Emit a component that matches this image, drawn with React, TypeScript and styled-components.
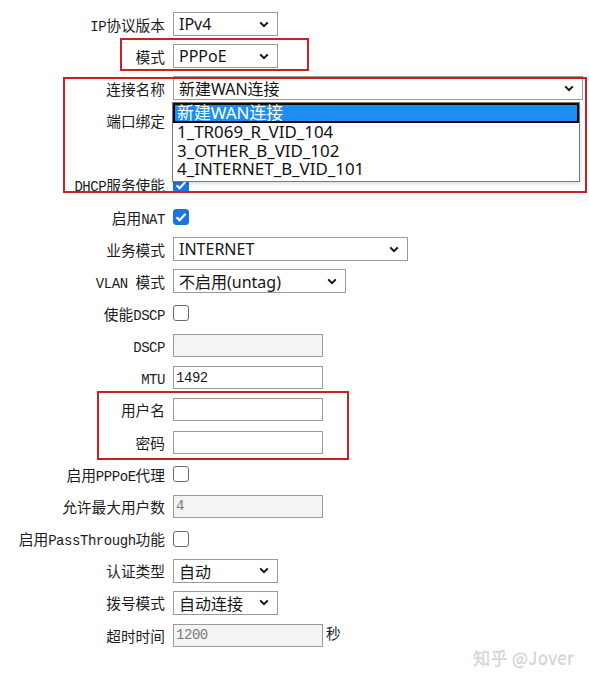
import React from 'react';
import styled, { createGlobalStyle } from 'styled-components';

const GlobalStyle = createGlobalStyle`
  html, body {
    margin: 0;
    padding: 0;
    background: #fff;
  }
  body {
    font-family: "Noto Sans", "Noto Sans CJK SC", sans-serif;
  }
`;

const ROW = 32.16;

const Page = styled.div`
  position: relative;
  width: 589px;
  height: 683px;
  padding-top: 8px;
  box-sizing: border-box;
  overflow: hidden;
`;

const Form = styled.div`
  display: flex;
  flex-direction: column;
`;

const Row = styled.div<{ $span?: number }>`
  display: grid;
  grid-template-columns: 165px 1fr;
  column-gap: 8px;
  align-items: start;
  height: ${({ $span }) => ROW * ($span || 1)}px;
`;

const Label = styled.div`
  height: ${ROW}px;
  display: flex;
  align-items: center;
  justify-content: flex-end;
  white-space: nowrap;
  font-family: "Noto Sans CJK SC", sans-serif;
  font-size: 14.7px;
  color: #1c1c1c;
`;

const Latin = styled.span`
  font-family: "Liberation Mono", monospace;
  font-size: 14px;
  letter-spacing: -0.45px;
`;

const Field = styled.div`
  height: ${ROW}px;
  display: flex;
  align-items: center;
  gap: 3px;
`;

const SelectBox = styled.div<{ $w: number }>`
  box-sizing: border-box;
  width: ${({ $w }) => $w}px;
  height: 24px;
  border: 1px solid #9a9a9a;
  background: #fff;
  display: flex;
  align-items: center;
  justify-content: space-between;
  padding: 0 8px 0 5px;
  font-family: "Noto Sans", "Noto Sans CJK SC", sans-serif;
  font-size: 16px;
  color: #151515;

  svg {
    width: 10px;
    height: 7px;
    flex: none;
  }
`;

const TextBox = styled.div<{ $disabled?: boolean }>`
  box-sizing: border-box;
  width: 150px;
  height: 23px;
  border: 1px solid #9a9a9a;
  background: ${({ $disabled }) => ($disabled ? '#f4f4f4' : '#fff')};
  color: ${({ $disabled }) => ($disabled ? '#7a7a7a' : '#1c1c1c')};
  display: flex;
  align-items: center;
  padding-left: 2px;
  font-family: "Liberation Mono", monospace;
  font-size: 14px;
  letter-spacing: -0.45px;
`;

const Check = styled.div<{ $on?: boolean }>`
  box-sizing: border-box;
  width: 16px;
  height: 16px;
  border-radius: 3px;
  border: 1px solid ${({ $on }) => ($on ? '#1b74e4' : '#6a6a6a')};
  background: ${({ $on }) => ($on ? '#1b74e4' : '#fff')};
  display: flex;
  align-items: center;
  justify-content: center;

  svg {
    width: 12px;
    height: 10px;
  }
`;

const Unit = styled.span`
  align-self: flex-start;
  margin-top: 3px;
  font-family: "Noto Sans CJK SC", sans-serif;
  font-size: 14.7px;
  color: #1c1c1c;
`;

const Mark = styled.div<{ $x: number; $y: number; $w: number; $h: number }>`
  position: absolute;
  left: ${({ $x }) => $x}px;
  top: ${({ $y }) => $y}px;
  width: ${({ $w }) => $w}px;
  height: ${({ $h }) => $h}px;
  box-sizing: border-box;
  border: 2px solid #cc1f24;
  pointer-events: none;
`;

const DropList = styled.div`
  position: absolute;
  left: 172px;
  top: 102px;
  width: 408px;
  height: 80px;
  box-sizing: border-box;
  border: 1px solid #7a7a7a;
  background: #fff;
  box-shadow: 1px 2px 3px rgba(0, 0, 0, 0.12);
  font-family: "Noto Sans", "Noto Sans CJK SC", sans-serif;
  font-size: 16.9px;
  line-height: 16px;
  color: #111;
`;

const Option = styled.div<{ $active?: boolean }>`
  box-sizing: border-box;
  height: ${({ $active }) => ($active ? 20 : 18.6)}px;
  display: flex;
  align-items: center;
  padding-left: ${({ $active }) => ($active ? 2 : 4)}px;
  background: ${({ $active }) => ($active ? '#1e8cf5' : 'transparent')};
  color: ${({ $active }) => ($active ? '#fff' : '#111')};
  border: ${({ $active }) => ($active ? '2px solid #0a0a0a' : 'none')};
  white-space: nowrap;
`;

const Watermark = styled.div`
  position: absolute;
  right: 15px;
  bottom: 13px;
  font-family: "Noto Sans CJK SC", sans-serif;
  font-size: 17px;
  color: #d2d2d2;
  text-shadow: 0 1px 0 #fff, 0 -1px 0 #e6e6e6;
  letter-spacing: 0.3px;
`;

const Chevron = () => (
  <svg viewBox="0 0 10 7">
    <path d="M1.2 1.4 L5 5.2 L8.8 1.4" fill="none" stroke="#111" strokeWidth="2" />
  </svg>
);

const Tick = () => (
  <svg viewBox="0 0 12 10">
    <path d="M1.5 5.2 L4.6 8.2 L10.5 1.8" fill="none" stroke="#fff" strokeWidth="2.2" />
  </svg>
);

// ascii runs get the narrow monospace face, all in one inline box so baselines line up
function text(t: string) {
  return (
    <span>
      {t.split(/([\x20-\x7e]+)/).filter(Boolean).map((part, i) =>
        /^[\x20-\x7e]+$/.test(part) ? <Latin key={i}>{part}</Latin> : part
      )}
    </span>
  );
}

type Control =
  | { kind: 'select'; value: string; w: number }
  | { kind: 'input'; value?: string; disabled?: boolean; unit?: string }
  | { kind: 'check'; on?: boolean }
  | { kind: 'none' };

interface RowDef {
  label: string;
  control: Control;
  span?: number;
}

const rows: RowDef[] = [
  { label: 'IP协议版本', control: { kind: 'select', value: 'IPv4', w: 105 } },
  { label: '模式', control: { kind: 'select', value: 'PPPoE', w: 105 } },
  { label: '连接名称', control: { kind: 'select', value: '新建WAN连接', w: 410 } },
  { label: '端口绑定', control: { kind: 'none' }, span: 2 },
  { label: 'DHCP服务使能', control: { kind: 'check', on: true } },
  { label: '启用NAT', control: { kind: 'check', on: true } },
  { label: '业务模式', control: { kind: 'select', value: 'INTERNET', w: 235 } },
  { label: 'VLAN 模式', control: { kind: 'select', value: '不启用(untag)', w: 173 } },
  { label: '使能DSCP', control: { kind: 'check' } },
  { label: 'DSCP', control: { kind: 'input', disabled: true } },
  { label: 'MTU', control: { kind: 'input', value: '1492' } },
  { label: '用户名', control: { kind: 'input' } },
  { label: '密码', control: { kind: 'input' } },
  { label: '启用PPPoE代理', control: { kind: 'check' } },
  { label: '允许最大用户数', control: { kind: 'input', value: '4', disabled: true } },
  { label: '启用PassThrough功能', control: { kind: 'check' } },
  { label: '认证类型', control: { kind: 'select', value: '自动', w: 105 } },
  { label: '拨号模式', control: { kind: 'select', value: '自动连接', w: 105 } },
  { label: '超时时间', control: { kind: 'input', value: '1200', disabled: true, unit: '秒' } },
];

const connOptions = ['新建WAN连接', '1_TR069_R_VID_104', '3_OTHER_B_VID_102', '4_INTERNET_B_VID_101'];

function renderControl(c: Control) {
  switch (c.kind) {
    case 'select':
      return (
        <SelectBox $w={c.w}>
          <span>{c.value}</span>
          <Chevron />
        </SelectBox>
      );
    case 'input':
      return (
        <>
          <TextBox $disabled={c.disabled}>{c.value}</TextBox>
          {c.unit && <Unit>{c.unit}</Unit>}
        </>
      );
    case 'check':
      return <Check $on={c.on}>{c.on && <Tick />}</Check>;
    default:
      return null;
  }
}

export default function App() {
  return (
    <>
      <GlobalStyle />
      <Page>
        <Form>
          {rows.map((r) => (
            <Row key={r.label} $span={r.span}>
              <Label>{text(r.label)}</Label>
              <Field>{renderControl(r.control)}</Field>
            </Row>
          ))}
        </Form>

        <DropList>
          {connOptions.map((o, i) => (
            <Option key={o} $active={i === 0}>{o}</Option>
          ))}
        </DropList>

        <Mark $x={120} $y={38} $w={189} $h={33} />
        <Mark $x={63} $y={77} $w={524} $h={116} />
        <Mark $x={97} $y={391} $w={252} $h={69} />

        <Watermark>知乎 @Jover</Watermark>
      </Page>
    </>
  );
}
